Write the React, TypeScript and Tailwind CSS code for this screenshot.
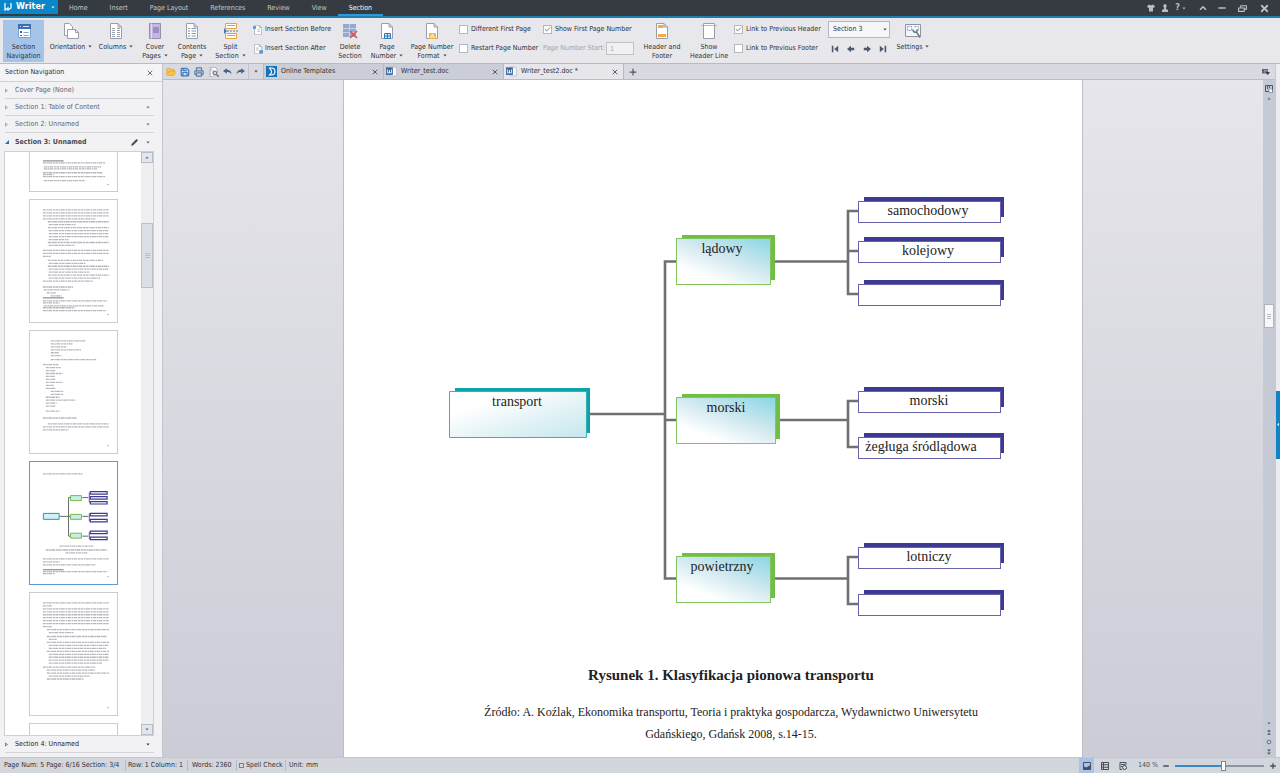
import type { ReactNode } from 'react'
import clsx from 'clsx'
import {
  Check,
  ChevronUp,
  FolderOpen,
  Minus,
  Pencil,
  Plus,
  Printer,
  Save,
  X,
} from 'lucide-react'

const menuTabs = ['Home', 'Insert', 'Page Layout', 'References', 'Review', 'View', 'Section']

const documentTabs = [
  { title: 'Online Templates', icon: 'online', active: false },
  { title: 'Writer_test.doc', icon: 'doc', active: false },
  { title: 'Writer_test2.doc *', icon: 'doc', active: true },
]

// Each entry is [left, right, top] of one line of text in a page preview.
type Line = [number, number, number]

const previewEnd: Line[] = [
  [13, 76, 11], [14, 72, 15], [14, 68, 17], [13, 73, 21], [13, 24, 23], [13, 76, 25], [14, 56, 29],
]

const previewText: Line[] = [
  [13, 80, 10], [13, 80, 13], [13, 80, 16], [13, 66, 19], [18, 80, 22], [19, 46, 25], [18, 80, 28],
  [19, 80, 31], [19, 80, 34], [19, 80, 37], [19, 39, 40], [18, 80, 43], [19, 45, 46], [13, 80, 51],
  [13, 80, 54], [13, 21, 57], [18, 74, 61], [19, 56, 64], [18, 80, 67], [19, 80, 70], [19, 60, 73],
  [18, 80, 76], [19, 71, 79], [13, 64, 82], [13, 44, 88], [14, 40, 91], [17, 26, 94], [21, 32, 97],
  [13, 78, 102], [13, 30, 104], [14, 75, 107], [13, 45, 109], [13, 77, 112],
]

const previewList: Line[] = [
  [21, 56, 10], [21, 43, 13], [21, 37, 16], [21, 52, 19], [21, 29, 22], [21, 32, 25], [21, 67, 29],
  [13, 29, 34], [16, 31, 37], [16, 26, 40], [16, 33, 43], [16, 25, 46], [16, 26, 49], [16, 33, 52],
  [16, 24, 55], [16, 26, 58], [21, 34, 61], [21, 34, 64], [16, 30, 67], [16, 46, 70], [16, 27, 73],
  [16, 26, 76], [16, 30, 81], [13, 47, 88], [18, 80, 94], [13, 80, 97], [13, 39, 100],
]

const previewChart: Line[] = [
  [13, 53, 12], [30, 64, 85], [16, 78, 89], [36, 58, 92], [13, 80, 98], [13, 30, 101], [13, 66, 104],
  [13, 78, 111], [13, 25, 113],
]

const previewDense: Line[] = [
  [13, 80, 10], [13, 22, 13], [13, 80, 16], [13, 80, 19], [13, 80, 22], [13, 80, 25], [13, 80, 28],
  [13, 80, 31], [13, 22, 34], [17, 80, 37], [19, 44, 40], [17, 78, 44], [19, 27, 47], [17, 80, 50],
  [19, 80, 53], [19, 77, 56], [17, 80, 59], [19, 80, 62], [19, 80, 65], [19, 80, 68], [19, 73, 71],
  [13, 66, 75], [17, 66, 78], [17, 80, 81], [19, 61, 84], [17, 54, 87],
]

const branches = [
  { label: 'lądowy', x: 677, y: 238, width: 95, textX: 722 },
  { label: 'morski', x: 677, y: 397, width: 100, textX: 726 },
  { label: 'powietrzny', x: 677, y: 556, width: 95, textX: 722 },
]

const leaves = [
  { label: 'samochodowy', y: 202, textX: 928 },
  { label: 'kolejowy', y: 242, textX: 928 },
  { label: '', y: 285, textX: 928 },
  { label: 'morski', y: 392, textX: 929 },
  { label: 'żegługa śródlądowa', y: 438, textX: 921 },
  { label: 'lotniczy', y: 548, textX: 929 },
  { label: '', y: 595, textX: 929 },
]

function Caret({ className }: { className?: string }) {
  return (
    <svg viewBox="0 0 6 4" className={clsx('inline-block h-[3px] w-1 shrink-0', className)} aria-hidden="true">
      <path d="M.5 .5h5L3 3.500z" fill="currentColor" opacity=".85" />
    </svg>
  )
}

function Icon({ children, className = 'size-4' }: { children: ReactNode; className?: string }) {
  return (
    <svg viewBox="0 0 16 16" fill="none" className={clsx('shrink-0', className)} aria-hidden="true">
      {children}
    </svg>
  )
}

function Sheet({ fill = '#fff' }: { fill?: string }) {
  return <path d="M2.500.5h7.500l3.500 3.500v11.500h-11zM10 .5v3.500h3.500" fill={fill} stroke="#9a9ea8" />
}

const icons = {
  navigation: (
    <Icon>
      <path d="M2.500 1.500h12v13h-12z" fill="#fff" stroke="#7fa3d3" />
      <path d="M2 1h13v5H2z" fill="#3c6cb8" />
      <path d="M4 3.500h1M7 3.500h6" stroke="#dbe7f6" />
      <path d="M4 8h2v2H4zM4 12h2v1H4z" fill="#3c6cb8" />
      <path d="M7.500 9.500h5M7.500 12.500h5" stroke="#7fa3d3" />
    </Icon>
  ),
  orientation: (
    <Icon>
      <path d="M1.500.5h5l3 3v9h-8z" fill="#fff" stroke="#9a9ea8" />
      <path d="M4.500 6.500h8l3 3v6h-11z" fill="#fff" stroke="#9a9ea8" />
      <path d="M12.500 6.500v3h3" stroke="#9a9ea8" />
    </Icon>
  ),
  columns: (
    <Icon>
      <Sheet />
      <path d="M4 5.500h3M9 5.500h3M4 7.500h3M9 7.500h3M4 9.500h3M9 9.500h3M4 11.500h3M9 11.500h3M4 13.500h3M9 13.500h3" stroke="#9aa3b0" />
    </Icon>
  ),
  cover: (
    <Icon>
      <path d="M2.500.5h11v15h-11z" fill="#c3b6e0" stroke="#9790ac" />
      <path d="M4.500.5v15" stroke="#e2dbf0" />
      <path d="M6 4h6v6H6z" fill="#9c8cc8" />
    </Icon>
  ),
  contents: (
    <Icon>
      <Sheet />
      <path d="M4 5.500h2M7.500 5.500h4.500M4 8h2M7.500 8h4.500M4 10.500h2M7.500 10.500h4.500M4 13h2M7.500 13h4.500" stroke="#7f97b8" />
    </Icon>
  ),
  split: (
    <Icon>
      <path d="M2.500.5h11v5h-11zM2.500 10.500h11v5h-11z" fill="#fff" stroke="#e8a33d" />
      <path d="M4 2.500h8M4 12.500h8" stroke="#8fb0d8" />
      <path d="M1 8h14" stroke="#5a7ea9" strokeDasharray="2 1" />
      <path d="M1 5l3 3-3 3z" fill="#3f76b8" />
    </Icon>
  ),
  remove: (
    <Icon>
      <path d="M1 1h13v13H1z" fill="#8fabd3" />
      <path d="M1 5.500h13M1 9.500h13M7.500 1v13" stroke="#c1d1e8" />
      <path d="M8 8l7 7M15 8l-7 7" stroke="#e0524b" strokeWidth="1.600" />
    </Icon>
  ),
  pageNumber: (
    <Icon>
      <Sheet />
      <path d="M5.500 10.500h6v5h-6z" fill="#d5e6f6" stroke="#2f78bd" />
      <path d="M8.500 10.500v5M5.500 13h6" stroke="#2f78bd" />
    </Icon>
  ),
  numberFormat: (
    <Icon>
      <Sheet />
      <path d="M5 10h7v6H5z" fill="#f5b83c" />
      <path d="M6.500 15l2-4 2 4M7.500 13.800h2" stroke="#fff" strokeWidth=".8" />
    </Icon>
  ),
  headerFooter: (
    <Icon>
      <Sheet />
      <path d="M4 2h5.500v3H4zM4 11h8v3H4z" fill="#f2aa4a" />
    </Icon>
  ),
  headerLine: (
    <Icon>
      <path d="M2.500.5h11v15h-11z" fill="#fff" stroke="#9a9ea8" />
      <path d="M0 2.500h16" stroke="#f2aa4a" />
    </Icon>
  ),
  settings: (
    <Icon>
      <path d="M.5 1.500h15v12H.5z" fill="#f5f6f9" stroke="#8d94a0" />
      <path d="M2.500 3.500h4v4h-4zM9.500 3.500h4v4" stroke="#8ea4c2" strokeDasharray="2 1" />
      <path d="M8 6.500a2.500 2.500 0 0 0 3.500 2.500L15 14.500M11.500 9l1-2.500" stroke="#6b7888" strokeWidth="1.600" />
    </Icon>
  ),
  insertBefore: (
    <Icon className="size-[10px]">
      <Sheet />
      <path d="M0 2h5v4H0z" fill="#4f93d2" />
      <path d="M7 7.500h4M7 10.500h4" stroke="#8792a1" />
    </Icon>
  ),
  insertAfter: (
    <Icon className="size-[10px]">
      <Sheet />
      <path d="M10 10h6v5h-6z" fill="#4f93d2" />
      <path d="M5 6.500h4M5 9.500h4" stroke="#8792a1" />
    </Icon>
  ),
}

type RibbonButtonProps = {
  icon: ReactNode
  lines: string[]
  width: string
  menu?: boolean
  active?: boolean
}

function RibbonButton({ icon, lines, width, menu, active }: RibbonButtonProps) {
  return (
    <button
      type="button"
      className={clsx(
        'flex h-[42px] shrink-0 flex-col items-center pt-[3px] whitespace-nowrap',
        width,
        active && 'bg-[#a6c4e8]',
      )}
    >
      {icon}
      <span className="mt-1 block leading-[9px]">
        {lines.map((line, index) => (
          <span key={line} className="block">
            {line}
            {menu && index === lines.length - 1 && <Caret className="mb-px ml-[3px]" />}
          </span>
        ))}
      </span>
    </button>
  )
}

function RibbonCheckbox({ label, checked = false }: { label: string; checked?: boolean }) {
  return (
    <label className="flex h-[19px] items-center gap-[3px] whitespace-nowrap">
      <span className="grid *:col-start-1 *:row-start-1">
        <input
          type="checkbox"
          defaultChecked={checked}
          className="peer size-[9px] appearance-none border border-[#b5b8c0] bg-white"
        />
        <Check className="pointer-events-none invisible size-[9px] p-px text-[#5c6675] peer-checked:visible" strokeWidth={3} />
      </span>
      {label}
    </label>
  )
}

function ArrowButton({ label, children }: { label: string; children: ReactNode }) {
  return (
    <button type="button" aria-label={label} className="text-[#4c5a6b]">
      <svg viewBox="0 0 10 10" className="size-2" fill="currentColor" aria-hidden="true">
        {children}
      </svg>
    </button>
  )
}

function TitleBar() {
  return (
    <header className="flex h-[18px] shrink-0 border-b-2 border-[#1c7fae] bg-[#363b41] text-[#c3c7cb]">
      <button type="button" className="flex h-[14px] w-[58px] items-center bg-[#0b86c9] pl-1 text-[9px] font-bold text-white">
        <svg viewBox="0 0 16 16" className="h-2 w-2" fill="none" stroke="currentColor" strokeWidth="2.500" aria-hidden="true">
          <path d="M2 0v14l6-4v4l6-4V0" />
        </svg>
        <span className="ml-[4px] grow text-left">Writer</span>
        <Caret className="mr-[3px]" />
      </button>
      <nav className="flex">
        {menuTabs.map((tab) => (
          <a
            key={tab}
            href="#"
            className={clsx(
              'px-[11px] leading-[17px]',
              tab === 'Section' && 'border-b-2 border-[#2d9bd8] text-white',
            )}
          >
            {tab}
          </a>
        ))}
      </nav>
      <div className="ml-auto flex items-center pr-[10px] text-[#b9bec4]">
        <button type="button" aria-label="Skin">
          <Icon className="size-2">
            <path d="M5 1L0 4l2 4 2-1v8h8V7l2 1 2-4-5-3-3 2z" fill="currentColor" />
          </Icon>
        </button>
        <button type="button" aria-label="Account" className="ml-[6px]">
          <Icon className="size-2">
            <path d="M8 0a4 4 0 0 1 2 7v3l4 2v4H2v-4l4-2V7a4 4 0 0 1 2-7" fill="currentColor" />
          </Icon>
        </button>
        <button type="button" aria-label="Help" className="ml-[6px] flex items-center gap-[2px] text-[9px] font-bold">
          ?<Caret />
        </button>
        <button type="button" aria-label="Collapse ribbon" className="ml-[12px]">
          <ChevronUp className="size-[10px]" strokeWidth={4} />
        </button>
        <button type="button" aria-label="Minimize" className="ml-[9px]">
          <Minus className="size-[10px]" strokeWidth={4} />
        </button>
        <button type="button" aria-label="Restore" className="ml-[11px]">
          <Icon className="size-[9px]">
            <path d="M5 6V3h10v6h-4M1 7h10v6H1z" stroke="currentColor" strokeWidth="2" />
          </Icon>
        </button>
        <button type="button" aria-label="Close" className="ml-[12px]">
          <X className="size-[11px]" strokeWidth={4} />
        </button>
      </div>
    </header>
  )
}

function Ribbon() {
  return (
    <div className="flex h-[46px] shrink-0 border-b border-[#b9bbc2] bg-[#e7e7ec] pt-[2px] pl-[3px]">
      <RibbonButton icon={icons.navigation} lines={['Section', 'Navigation']} width="w-[41px]" active />
      <RibbonButton icon={icons.orientation} lines={['Orientation']} width="w-[54px]" menu />
      <RibbonButton icon={icons.columns} lines={['Columns']} width="w-9" menu />
      <RibbonButton icon={icons.cover} lines={['Cover', 'Pages']} width="w-[42px]" menu />
      <RibbonButton icon={icons.contents} lines={['Contents', 'Page']} width="w-8" menu />
      <RibbonButton icon={icons.split} lines={['Split', 'Section']} width="w-[45px]" menu />
      <div className="flex w-[81px] shrink-0 flex-col whitespace-nowrap">
        <button type="button" className="flex h-[19px] items-center gap-[2px]">
          {icons.insertBefore}
          Insert Section Before
        </button>
        <button type="button" className="flex h-[19px] items-center gap-[2px]">
          {icons.insertAfter}
          Insert Section After
        </button>
      </div>
      <RibbonButton icon={icons.remove} lines={['Delete', 'Section']} width="w-8" />
      <RibbonButton icon={icons.pageNumber} lines={['Page', 'Number']} width="w-[42px]" menu />
      <RibbonButton icon={icons.numberFormat} lines={['Page Number', 'Format']} width="w-12" menu />
      <div className="ml-[3px] w-[84px] shrink-0">
        <RibbonCheckbox label="Different First Page" />
        <RibbonCheckbox label="Restart Page Number" />
      </div>
      <div className="w-[95px] shrink-0">
        <RibbonCheckbox label="Show First Page Number" checked />
        <label className="flex h-[19px] items-center gap-px whitespace-nowrap text-[#a2a4ab]">
          Page Number Start:
          <input
            type="text"
            defaultValue="1"
            className="h-[13px] w-7 border border-[#c0c2c8] bg-[#f1f1f4] px-[3px]"
          />
        </label>
      </div>
      <RibbonButton icon={icons.headerFooter} lines={['Header and', 'Footer']} width="w-12" />
      <RibbonButton icon={icons.headerLine} lines={['Show', 'Header Line']} width="w-[46px]" />
      <div className="ml-[2px] w-[94px] shrink-0">
        <RibbonCheckbox label="Link to Previous Header" checked />
        <RibbonCheckbox label="Link to Previous Footer" />
      </div>
      <div className="w-[62px] shrink-0 pt-px">
        <div className="grid items-center *:col-start-1 *:row-start-1">
          <select aria-label="Section" className="h-[17px] appearance-none border border-[#b5b8c0] bg-[#f6f6f9] pl-1">
            <option>Section 3</option>
          </select>
          <Caret className="pointer-events-none mr-[3px] justify-self-end" />
        </div>
        <div className="mt-[7px] flex items-center justify-between px-[3px]">
          <ArrowButton label="First section">
            <path d="M1 1h2v8H1zM9 1v8L4 5z" />
          </ArrowButton>
          <ArrowButton label="Previous section">
            <path d="M0 5l5-4v2.500h4v3H5V9z" />
          </ArrowButton>
          <ArrowButton label="Next section">
            <path d="M10 5L5 1v2.500H1v3h4V9z" />
          </ArrowButton>
          <ArrowButton label="Last section">
            <path d="M7 1h2v8H7zM1 1v8l5-4z" />
          </ArrowButton>
        </div>
      </div>
      <RibbonButton icon={icons.settings} lines={['Settings']} width="w-[46px]" menu />
    </div>
  )
}

function SectionRow({ label, menu = true, dark = false }: { label: string; menu?: boolean; dark?: boolean }) {
  return (
    <button
      type="button"
      className={clsx(
        'mr-2 ml-[5px] flex h-[17px] shrink-0 items-center border-b border-[#d4d4d8] text-left',
        dark ? 'text-[#1f2023]' : 'text-[#66676c]',
      )}
    >
      <svg viewBox="0 0 6 8" className="h-[5px] w-[3px]" fill="none" stroke="currentColor" aria-hidden="true">
        <path d="M1 1l4 3-4 3z" />
      </svg>
      <span className="ml-[7px] grow">{label}</span>
      {menu && <Caret className="mr-1" />}
    </button>
  )
}

type PagePreviewProps = {
  lines?: Line[]
  rule?: number
  selected?: boolean
  partial?: boolean
  children?: ReactNode
}

function PagePreview({ lines = [], rule, selected, partial, children }: PagePreviewProps) {
  return (
    <button
      type="button"
      aria-label="Go to page"
      className={clsx(
        'w-[89px] shrink-0 border bg-white',
        selected ? 'border-[#5b9bd5]' : 'border-[#cbcbd0]',
        partial ? 'h-10 border-t-0' : 'h-[124px]',
      )}
    >
      <svg viewBox={partial ? '0 0 88 40' : '0 0 88 123'} className="w-full" aria-hidden="true">
        {lines.map(([left, right, top]) => (
          <path
            key={`${left}-${top}`}
            d={`M${left} ${top}H${right}`}
            stroke="#b4b6bc"
            strokeWidth="1.300"
            strokeDasharray="3 .6 1.500 .4 4 .7 2 .5"
          />
        ))}
        {rule && <path d={`M13 ${rule}h21`} stroke="#77777c" />}
        {lines.length > 0 && <path d={partial ? 'M78 33h2' : 'M78 116h2'} stroke="#b4b6bc" />}
        {children}
      </svg>
    </button>
  )
}

function ChartPreview() {
  return (
    <g fill="#fff">
      <path d="M30 55h9M39 36v39M39 36h2M39 55h2M39 75h2M53 36h6M53 55h6M53 75h6M60 31v10M60 52v8M60 71v7" stroke="#66666b" />
      <path d="M13.500 52h16v6h-16z" fill="#d3f0f4" stroke="#0aa5ad" />
      {[34, 53, 72].map((y) => (
        <path key={y} d={`M41 ${y}h11v5H41z`} fill="#c9ecf0" stroke="#76bc43" />
      ))}
      {[30, 35, 40, 52, 58, 70, 76].map((y) => (
        <path key={y} d={`M61 ${y}h17v2.500H61z`} stroke="#3d3a94" strokeWidth="1.200" />
      ))}
    </g>
  )
}

function Sidebar() {
  return (
    <aside className="flex w-[163px] shrink-0 flex-col border-r border-[#c3c5cb] bg-[#f2f1f3]">
      <div className="flex h-[18px] shrink-0 items-center border-b border-[#cfd0d5] bg-[#f4f4f7] pr-2 pl-[5px]">
        <h2 className="grow">Section Navigation</h2>
        <button type="button" aria-label="Close section navigation">
          <X className="size-2" strokeWidth={2} />
        </button>
      </div>
      <SectionRow label="Cover Page (None)" menu={false} />
      <SectionRow label="Section 1: Table of Content" />
      <SectionRow label="Section 2: Unnamed" />
      <div className="mr-2 ml-[5px] flex h-[18px] shrink-0 items-center font-bold text-[#4a4b50]">
        <svg viewBox="0 0 6 6" className="size-1" aria-hidden="true">
          <path d="M6 0v6H0z" fill="#1f6db0" />
        </svg>
        <span className="ml-[6px] grow">Section 3: Unnamed</span>
        <button type="button" aria-label="Rename section">
          <Pencil className="size-[7px]" fill="currentColor" />
        </button>
        <Caret className="mr-1 ml-2" />
      </div>
      <div className="mr-2 ml-1 flex min-h-0 grow border border-[#cfcfd4] bg-white">
        <div className="flex grow flex-col gap-[7px] overflow-hidden pl-6">
          <PagePreview lines={previewEnd} rule={9} partial />
          <PagePreview lines={previewText} rule={99} />
          <PagePreview lines={previewList} />
          <PagePreview lines={previewChart} rule={109} selected>
            <ChartPreview />
          </PagePreview>
          <PagePreview lines={previewDense} />
          <PagePreview />
        </div>
        <div className="flex w-3 shrink-0 flex-col bg-[#efeef1] text-[#4c5a6b]">
          <button type="button" aria-label="Scroll up" className="flex h-[11px] items-center justify-center border border-[#b6bcc8] bg-[#e3e6ec]">
            <Caret className="rotate-180" />
          </button>
          <div className="mt-[60px] flex h-[65px] flex-col items-center justify-center gap-px border border-[#bcc0c9] bg-[#dcdfe6]">
            <span className="h-px w-[5px] bg-[#b9bec8]" />
            <span className="h-px w-[5px] bg-[#b9bec8]" />
            <span className="h-px w-[5px] bg-[#b9bec8]" />
          </div>
          <button type="button" aria-label="Scroll down" className="mt-auto flex h-[11px] items-center justify-center border border-[#b6bcc8] bg-[#e3e6ec]">
            <Caret />
          </button>
        </div>
      </div>
      <div className="mb-1 flex flex-col">
        <SectionRow label="Section 4: Unnamed" dark />
      </div>
    </aside>
  )
}

function DocIcon() {
  return (
    <Icon className="size-[11px]">
      <path d="M6 1.500h7l2.500 2.500v10.500H6z" fill="#f4f6fa" stroke="#a3abb9" />
      <path d="M0 2h10v11H0z" fill="#3d669f" />
      <path d="M2 5v5h3V6v4h3V5" stroke="#fff" strokeWidth="1.200" />
    </Icon>
  )
}

function TabBar() {
  return (
    <div className="flex h-4 shrink-0 border-b border-[#b9bcc5] bg-[#d9dae1]">
      <div className="flex w-[86px] shrink-0 items-center justify-between border-r border-[#bfc2ca] px-[3px] text-[#4c6483]">
        <button type="button" aria-label="Open">
          <FolderOpen className="size-[10px] text-[#e3a62b]" fill="#f7c548" />
        </button>
        <button type="button" aria-label="Save">
          <Save className="size-[10px] text-[#3f7cbd]" strokeWidth={3} />
        </button>
        <button type="button" aria-label="Print">
          <Printer className="size-[10px] text-[#5d7da5]" strokeWidth={3} />
        </button>
        <button type="button" aria-label="Print preview">
          <Icon className="size-[10px]">
            <path d="M2 .5h8l3 3V9M2 .5v15h5" fill="#fff" stroke="#808894" />
            <circle cx="9.500" cy="9.500" r="3" stroke="currentColor" strokeWidth="1.500" />
            <path d="M12 12l3.500 3.500" stroke="currentColor" strokeWidth="2" />
          </Icon>
        </button>
        <button type="button" aria-label="Undo">
          <Icon className="size-[9px]">
            <path d="M0 7l7-5v3c5 0 8 3 8 8-2-3-4-4-8-4v3z" fill="currentColor" />
          </Icon>
        </button>
        <button type="button" aria-label="Redo">
          <Icon className="size-[9px]">
            <path d="M16 7L9 2v3c-5 0-8 3-8 8 2-3 4-4 8-4v3z" fill="currentColor" />
          </Icon>
        </button>
      </div>
      <button type="button" aria-label="Customize toolbar" className="flex w-[14px] shrink-0 items-center justify-center">
        <Caret />
      </button>
      {documentTabs.map((tab) => (
        <div
          key={tab.title}
          className={clsx(
            'flex w-[120px] items-center border-l border-[#b5b9c3] pr-1 pl-[2px]',
            tab.active ? 'bg-[#e6e6eb]' : 'bg-[#cbced7]',
          )}
        >
          {tab.icon === 'doc' ? (
            <DocIcon />
          ) : (
            <Icon className="size-[11px]">
              <path d="M0 0h16v16H0z" fill="#1673b8" />
              <path d="M5 3h3a5 5 0 0 1 0 10H5l3-3V7z" stroke="#fff" strokeWidth="1.600" />
            </Icon>
          )}
          <a href="#" className="ml-1 grow">
            {tab.title}
          </a>
          <button type="button" aria-label={`Close ${tab.title}`}>
            <X className="size-2 text-[#555a64]" strokeWidth={3} />
          </button>
        </div>
      ))}
      <button type="button" aria-label="New tab" className="flex w-[18px] items-center justify-center border-l border-[#b5b9c3]">
        <Plus className="size-[10px] text-[#4c5a6b]" strokeWidth={3} />
      </button>
      <button type="button" aria-label="Tab list" className="mr-[5px] ml-auto">
        <Icon className="size-2">
          <path d="M0 2h12v9H0z" fill="#5d6673" />
          <path d="M4 5h7M4 8h5" stroke="#d9dae1" />
          <path d="M7 8h9l-4.500 6z" fill="#333a45" />
        </Icon>
      </button>
    </div>
  )
}

function TransportChart() {
  return (
    <svg viewBox="440 190 570 430" className="block w-[570px] font-['Liberation_Serif',serif] text-[14px]" role="img" aria-label="Klasyfikacja pionowa transportu">
      <defs>
        <linearGradient id="branch-fill" x1="0.100" y1="1" x2="0.900" y2="0">
          <stop offset="0.200" stopColor="#fff" />
          <stop offset="0.600" stopColor="#cde7ee" />
          <stop offset="1" stopColor="#8fd8e6" />
        </linearGradient>
        <linearGradient id="root-fill" x1="0" y1="0" x2="1" y2="1">
          <stop offset="0.250" stopColor="#fff" />
          <stop offset="1" stopColor="#c5e6ed" />
        </linearGradient>
      </defs>

      <g fill="none" stroke="#6f7073" strokeWidth="2.600">
        <path d="M590 414h75M677 261.500h-12v317h12M665 420h12" />
        <path d="M775 261.500h73M859 211h-11v83h11M848 251h11" />
        <path d="M780 420h68M859 401h-11v46h11" />
        <path d="M775 578.500h73M859 557h-11v47h11" />
      </g>

      <path d="M455 388h135v45H455z" fill="#0aa3ac" />
      <path d="M449.500 391.500h137v46h-137z" fill="url(#root-fill)" stroke="#31b3ba" />
      <text x="517" y="406" textAnchor="middle" fill="#222">
        transport
      </text>

      {branches.map(({ label, x, y, width, textX }) => (
        <g key={label}>
          <rect x={x + 5} y={y - 3} width={width - 2} height="45" fill="#70bf44" />
          <rect x={x - 0.5} y={y + 0.5} width={width - 1} height="46" fill="url(#branch-fill)" stroke="#84c65d" />
          <text x={textX} y={y + 15} textAnchor="middle" fill="#222">
            {label}
          </text>
        </g>
      ))}

      {leaves.map(({ label, y, textX }) => (
        <g key={y}>
          <rect x="864" y={y - 5} width="140" height="20" fill="#3d3a94" />
          <rect x="858.500" y={y - 0.5} width="142" height="21" fill="#fff" stroke="#6663ab" />
          <text x={textX} y={y + 13} textAnchor="middle" fill="#222">
            {label}
          </text>
        </g>
      ))}
    </svg>
  )
}

function DocumentPage() {
  return (
    <article className="mx-auto w-[740px] shrink-0 overflow-hidden border-x border-[#bcbfc8] bg-white pt-[110px] pr-[60px] pl-[96px] text-center font-['Liberation_Serif',serif] text-[#222]">
      <TransportChart />
      <p className="mt-[45px] text-[15px] leading-5 font-bold">
        Rysunek 1. Klasyfikacja pionowa transportu
      </p>
      <p className="mt-4 text-[12px] leading-[22px]">
        Źródło: A. Koźlak, Ekonomika transportu, Teoria i praktyka gospodarcza, Wydawnictwo Uniwersytetu
        <br />
        Gdańskiego, Gdańsk 2008, s.14-15.
      </p>
    </article>
  )
}

function DocumentScrollbar() {
  return (
    <div className="flex w-3 shrink-0 flex-col items-center bg-[#c6cad4] text-[#4c5a6b]">
      <button type="button" aria-label="Ruler" className="mt-[5px]">
        <Icon className="size-2">
          <path d="M1 1h14v12H1z" stroke="currentColor" strokeWidth="2" />
          <path d="M5 2v6M9 2v4" stroke="currentColor" strokeWidth="2" />
          <path d="M8 8h7v7H8z" fill="#fff" stroke="currentColor" />
        </Icon>
      </button>
      <button type="button" aria-label="Scroll up" className="mt-[4px] flex">
        <Caret className="rotate-180" />
      </button>
      <div className="mt-[204px] flex h-6 w-[10px] flex-col items-center justify-center gap-px border border-[#b0b4be] bg-[#f7f7f9]">
        <span className="h-px w-1 bg-[#b5b8bf]" />
        <span className="h-px w-1 bg-[#b5b8bf]" />
        <span className="h-px w-1 bg-[#b5b8bf]" />
      </div>
      <div className="mt-auto mb-[2px] flex flex-col items-center gap-1">
        <button type="button" aria-label="Scroll down" className="flex">
          <Caret />
        </button>
        <button type="button" aria-label="Previous page">
          <Icon className="size-[6px]">
            <path d="M8 1l5 6H3zM8 9l5 6H3z" fill="currentColor" />
          </Icon>
        </button>
        <button type="button" aria-label="Browse object">
          <Icon className="size-[6px]">
            <circle cx="8" cy="8" r="5" stroke="currentColor" strokeWidth="2" />
          </Icon>
        </button>
        <button type="button" aria-label="Next page">
          <Icon className="size-[6px]">
            <path d="M3 1h10L8 7zM3 9h10l-5 6z" fill="currentColor" />
          </Icon>
        </button>
      </div>
    </div>
  )
}

function StatusBar() {
  return (
    <footer className="flex h-4 shrink-0 items-center border-t border-[#c3c6cf] bg-[#d3d6dd] pr-[3px] whitespace-nowrap">
      <span className="w-[126px] border-r border-[#b7bac3] pl-1">Page Num: 5 Page: 6/16 Section: 3/4</span>
      <span className="w-[62px] border-r border-[#b7bac3] pl-[2px]">Row: 1 Column: 1</span>
      <span className="w-[49px] border-r border-[#b7bac3] pl-1">Words: 2360</span>
      <label className="flex w-[49px] items-center gap-[2px] border-r border-[#b7bac3] pl-[2px]">
        <input type="checkbox" className="size-[5px] appearance-none border border-[#7b808a]" />
        Spell Check
      </label>
      <span className="pl-[3px]">Unit: mm</span>

      <div className="ml-auto flex h-full items-center text-[#47505d]">
        <button type="button" aria-label="Print layout" className="flex h-full w-[15px] items-center justify-center bg-[#a9c3e6]">
          <Icon className="size-2">
            <path d="M1 1h14v14H1z" fill="#a9c3e6" stroke="currentColor" strokeWidth="2" />
            <path d="M2 9l5 2 4-3 3-1v7H2z" fill="currentColor" />
          </Icon>
        </button>
        <button type="button" aria-label="Outline" className="ml-[7px]">
          <Icon className="size-2">
            <path d="M1 1h14v14H1zM1 5.500h14M1 10.500h14M5 1v14" stroke="currentColor" strokeWidth="2" />
          </Icon>
        </button>
        <button type="button" aria-label="Web layout" className="ml-[10px]">
          <Icon className="size-2">
            <path d="M14 6V1H2v14h4M4 5h8M4 9h3" stroke="currentColor" strokeWidth="2" />
            <circle cx="11" cy="11" r="4" stroke="currentColor" strokeWidth="2" />
          </Icon>
        </button>
        <span className="ml-[11px] w-6">140 %</span>
        <button type="button" aria-label="Zoom out">
          <Minus className="size-2" strokeWidth={4} />
        </button>
        <input
          type="range"
          aria-label="Zoom"
          min={0}
          max={100}
          defaultValue={55}
          className="mx-[5px] h-[10px] w-[89px] appearance-none bg-transparent [&::-webkit-slider-runnable-track]:h-[2px] [&::-webkit-slider-runnable-track]:bg-linear-to-r [&::-webkit-slider-runnable-track]:from-[#3a88c8] [&::-webkit-slider-runnable-track]:from-55% [&::-webkit-slider-runnable-track]:to-[#8d94a1] [&::-webkit-slider-runnable-track]:to-55% [&::-webkit-slider-thumb]:-mt-1 [&::-webkit-slider-thumb]:h-[10px] [&::-webkit-slider-thumb]:w-[5px] [&::-webkit-slider-thumb]:appearance-none [&::-webkit-slider-thumb]:border [&::-webkit-slider-thumb]:border-[#7d8592] [&::-webkit-slider-thumb]:bg-white"
        />
        <button type="button" aria-label="Zoom in">
          <Plus className="size-2" strokeWidth={4} />
        </button>
      </div>
    </footer>
  )
}

export default function App() {
  return (
    <div className="flex h-screen flex-col overflow-hidden bg-[#e7e7ec] font-['DejaVu_Sans_Condensed','DejaVu_Sans',sans-serif] text-[7px] text-[#2f3136]">
      <TitleBar />
      <Ribbon />
      <div className="flex min-h-0 grow">
        <Sidebar />
        <main className="flex min-w-0 grow flex-col">
          <TabBar />
          <div className="flex min-h-0 grow bg-linear-to-b from-[#e6e6eb] to-[#cbccd6]">
            <div className="flex min-w-0 grow">
              <DocumentPage />
            </div>
            <DocumentScrollbar />
          </div>
        </main>
        <div className="flex w-[5px] shrink-0 flex-col justify-center border-l border-[#c6c8cf] bg-[#ededf1]">
          <button type="button" aria-label="Open task pane" className="mt-7 flex h-[68px] items-center justify-center bg-[#0f84c6] text-white">
            <Caret className="rotate-90" />
          </button>
        </div>
      </div>
      <StatusBar />
    </div>
  )
}
